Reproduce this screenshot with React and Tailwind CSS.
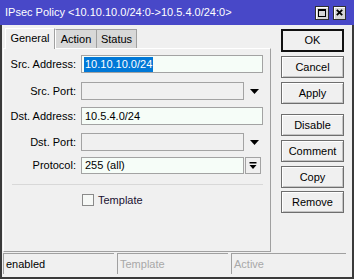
import React from 'react';

const Down = () => (
  <svg width="9" height="5" viewBox="0 0 9 5" className="block">
    <path d="M0 0H9L4.5 5Z" fill="#000" />
  </svg>
);

const BarDown = () => (
  <svg width="8" height="8" viewBox="0 0 8 8" className="block">
    <rect x="0.5" y="0" width="7" height="1.5" fill="#000" />
    <path d="M0.5 3H7.5L4 7Z" fill="#000" />
  </svg>
);

function Row({ label, mt, children }) {
  return (
    <div className={`flex items-center ${mt}`}>
      <div className="w-[72px] text-right">{label}</div>
      <div className="ml-[5px] flex items-center">{children}</div>
    </div>
  );
}

function Btn({ children, primary, mt }) {
  return (
    <div
      className={`h-[22px] flex items-center justify-center bg-[#f0f0f0] ${mt} ${
        primary
          ? 'h-[23px] border-2 border-[#111]'
          : 'border border-[#6e6e6e] shadow-[inset_1px_1px_0_#fff,inset_-1px_-1px_0_#c4c4c4]'
      }`}
    >
      {children}
    </div>
  );
}

export default function App() {
  return (
    <div className="w-[354px] h-[279px] flex flex-col bg-[#f0f0f0] text-black text-[11px] leading-none font-['Liberation_Sans',Arial,sans-serif] overflow-hidden">
      {/* Title bar */}
      <div className="h-[25px] shrink-0 bg-[#4848c8] text-white flex items-center pl-[5px] pr-[8px]">
        <span className="flex-1 text-[11px]">IPsec Policy &lt;10.10.10.0/24:0-&gt;10.5.4.0/24:0&gt;</span>
        <div className="flex gap-[4px]">
          <div className="w-[14px] h-[14px] bg-[#d6d6d6] border border-[#303030] shadow-[inset_1px_1px_0_#fff] flex items-center justify-center">
            <div className="w-[8px] h-[8px] border border-black border-t-2" />
          </div>
          <div className="w-[13px] h-[14px] bg-[#d6d6d6] border border-[#303030] shadow-[inset_1px_1px_0_#fff] flex items-center justify-center">
            <svg width="7" height="7" viewBox="0 0 7 7" className="block">
              <path d="M0.8 0.8L6.2 6.2M6.2 0.8L0.8 6.2" stroke="#000" strokeWidth="1.8" />
            </svg>
          </div>
        </div>
      </div>

      {/* Body */}
      <div className="flex-1 flex flex-col border-x-2 border-b-2 border-[#3a3a3a]">
        <div className="flex flex-1">
          {/* Tabs + panel */}
          <div className="w-[268px] ml-[1px] flex flex-col pt-[2px]">
            <div className="h-[21px] flex items-end ml-[2px]">
              <div className="w-[50px] h-[21px] bg-[#f0f0f0] border-t border-l border-white border-r border-r-[#a0a0a0] flex items-center justify-center pb-[1px] -mb-[1px] relative z-10">
                General
              </div>
              <div className="w-[42px] h-[19px] bg-[#d8d8d8] border-t border-r border-[#a0a0a0] border-l border-l-white flex items-center justify-center">
                Action
              </div>
              <div className="w-[40px] h-[19px] bg-[#d8d8d8] border-t border-r border-[#a0a0a0] flex items-center justify-center">
                Status
              </div>
            </div>
            <div className="flex-1 border-t border-l border-white border-r border-b border-r-[#a0a0a0] border-b-[#a0a0a0] flex flex-col pt-[6px]">
              <Row label="Src. Address:" mt="">
                <div className="w-[182px] h-[18px] bg-[#f6fdf8] border border-[#a3a3a3] flex items-center pl-[2px]">
                  <span className="bg-[#0078d7] text-white px-[1px] py-[2px]">10.10.10.0/24</span>
                </div>
              </Row>
              <Row label="Src. Port:" mt="mt-[9px]">
                <div className="w-[163px] h-[18px] bg-[#f0f0f0] border border-[#a3a3a3]" />
                <div className="ml-[6px]"><Down /></div>
              </Row>
              <Row label="Dst. Address:" mt="mt-[7px]">
                <div className="w-[182px] h-[18px] bg-[#f6fdf8] border border-[#a3a3a3] flex items-center pl-[3px]">
                  10.5.4.0/24
                </div>
              </Row>
              <Row label="Dst. Port:" mt="mt-[8px]">
                <div className="w-[163px] h-[18px] bg-[#f0f0f0] border border-[#a3a3a3]" />
                <div className="ml-[6px]"><Down /></div>
              </Row>
              <Row label="Protocol:" mt="mt-[6px]">
                <div className="w-[163px] h-[17px] bg-[#f6fdf8] border border-[#a3a3a3] flex items-center pl-[3px]">
                  255 (all)
                </div>
                <div className="ml-[1px] w-[16px] h-[17px] border border-[#a3a3a3] bg-[#f0f0f0] flex items-center justify-center">
                  <BarDown />
                </div>
              </Row>
              <div className="mt-[10px] ml-[8px] w-[251px] h-[1px] bg-[#d8d8d8]" />
              <div className="mt-[9px] ml-[78px] flex items-center">
                <div className="w-[12px] h-[12px] border border-[#8a8a8a] bg-[#f6f8f6]" />
                <span className="ml-[4px] text-[#1a1030]">Template</span>
              </div>
            </div>
          </div>

          {/* Buttons */}
          <div className="ml-[10px] w-[63px] flex flex-col pt-[4px]">
            <Btn primary>OK</Btn>
            <Btn mt="mt-[4px]">Cancel</Btn>
            <Btn mt="mt-[4px]">Apply</Btn>
            <Btn mt="mt-[10px]">Disable</Btn>
            <Btn mt="mt-[4px]">Comment</Btn>
            <Btn mt="mt-[4px]">Copy</Btn>
            <Btn mt="mt-[3px]">Remove</Btn>
          </div>
        </div>

        {/* Status bar */}
        <div className="h-[25px] shrink-0 flex pt-[1px]">
          <div className="ml-[1px] w-[111px] h-[21px] border-t border-l border-[#a0a0a0] flex items-center pl-[2px]">enabled</div>
          <div className="ml-[3px] w-[111px] h-[21px] border-t border-l border-[#a0a0a0] flex items-center pl-[2px] text-[#a8a8a8]">Template</div>
          <div className="ml-[3px] w-[115px] h-[21px] border-t border-l border-[#a0a0a0] flex items-center pl-[2px] text-[#a8a8a8]">Active</div>
        </div>
      </div>
    </div>
  );
}
